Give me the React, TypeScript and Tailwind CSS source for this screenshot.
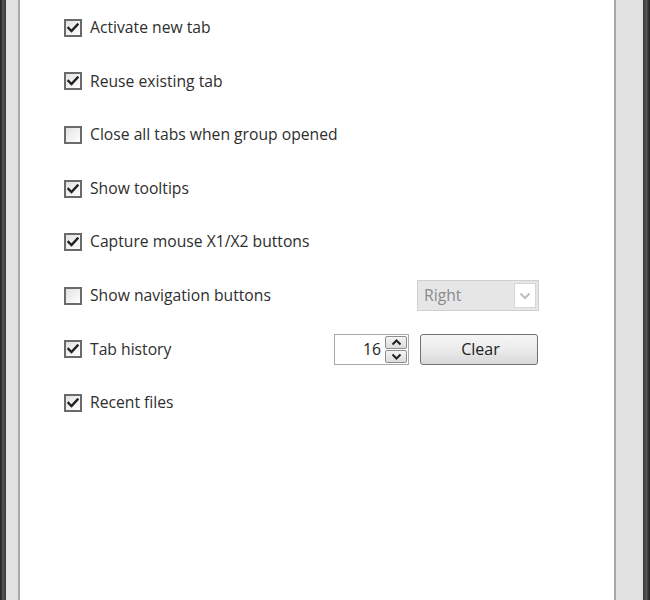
import React, { useState } from 'react';

type Opt = { id: string; label: string; checked: boolean };

const initial: Opt[] = [
  { id: 'activate', label: 'Activate new tab', checked: true },
  { id: 'reuse', label: 'Reuse existing tab', checked: true },
  { id: 'closeAll', label: 'Close all tabs when group opened', checked: false },
  { id: 'tooltips', label: 'Show tooltips', checked: true },
  { id: 'mouse', label: 'Capture mouse X1/X2 buttons', checked: true },
  { id: 'nav', label: 'Show navigation buttons', checked: false },
  { id: 'history', label: 'Tab history', checked: true },
  { id: 'recent', label: 'Recent files', checked: true },
];

const Check = ({ checked, onClick }: { checked: boolean; onClick: () => void }) => (
  <button
    onClick={onClick}
    className="w-[18px] h-[18px] shrink-0 border-2 border-[#6a6a6a] bg-gradient-to-br from-[#e2e2e2] to-white flex items-center justify-center"
  >
    {checked && (
      <svg width="12" height="10" viewBox="0 0 12 10">
        <path d="M1.5 5 L4.5 8 L10.5 1.5" fill="none" stroke="#222" strokeWidth="2.4" strokeLinecap="square" />
      </svg>
    )}
  </button>
);

export default function App() {
  const [opts, setOpts] = useState(initial);
  const [history, setHistory] = useState(16);

  const toggle = (id: string) =>
    setOpts(prev => prev.map(o => (o.id === id ? { ...o, checked: !o.checked } : o)));

  const font = { fontFamily: '"Segoe UI", "Open Sans", "Noto Sans", sans-serif' };

  return (
    <div className="flex h-[600px] w-[650px] overflow-hidden" style={font}>
      <div className="w-[6px] bg-gradient-to-r from-[#1c1c1c] via-[#555] to-[#3a3a3a]" />
      <div className="w-[12px] bg-[#e1e1e1]" />
      <div className="w-[2px] bg-[#a8a8a8]" />
      <div className="flex-1 bg-white pl-[44px] pt-[1px]">
        {opts.map(o => (
          <div key={o.id} className="h-[53.6px] flex items-center text-[15.7px] text-[#2e2e2e]">
            <div
              className={
                o.id === 'nav' ? 'flex items-center w-[353px]' : o.id === 'history' ? 'flex items-center w-[270px]' : 'flex items-center'
              }
            >
              <Check checked={o.checked} onClick={() => toggle(o.id)} />
              <span className="ml-[8px] whitespace-nowrap">{o.label}</span>
            </div>

            {o.id === 'nav' && (
              <div className="w-[122px] h-[31px] border border-[#cfcfcf] bg-[#e6e6e6] flex items-center pl-[6px] pr-[2px]">
                <span className="flex-1 text-[#8a8a8a]">Right</span>
                <div className="w-[22px] h-[25px] bg-white border border-[#d6d6d6] flex items-center justify-center">
                  <svg width="12" height="8" viewBox="0 0 12 8">
                    <path d="M1.5 1.5 L6 6 L10.5 1.5" fill="none" stroke="#bdbdbd" strokeWidth="2" />
                  </svg>
                </div>
              </div>
            )}

            {o.id === 'history' && (
              <div className="flex items-center">
                <div className="w-[75px] h-[31px] border border-[#a9a9a9] bg-white flex items-center pr-[1px]">
                  <span className="flex-1 text-right pr-[4px] text-[#222]">{history}</span>
                  <div className="w-[22px] h-[27px] flex flex-col gap-[1px]">
                    <button
                      onClick={() => setHistory(h => h + 1)}
                      className="flex-1 border border-[#8e8e8e] rounded-[2px] bg-gradient-to-b from-[#f4f4f4] to-[#dcdcdc] flex items-center justify-center"
                    >
                      <svg width="11" height="7" viewBox="0 0 11 7">
                        <path d="M1.5 5.5 L5.5 1.5 L9.5 5.5" fill="none" stroke="#222" strokeWidth="2" />
                      </svg>
                    </button>
                    <button
                      onClick={() => setHistory(h => Math.max(0, h - 1))}
                      className="flex-1 border border-[#8e8e8e] rounded-[2px] bg-gradient-to-b from-[#f4f4f4] to-[#dcdcdc] flex items-center justify-center"
                    >
                      <svg width="11" height="7" viewBox="0 0 11 7">
                        <path d="M1.5 1.5 L5.5 5.5 L9.5 1.5" fill="none" stroke="#222" strokeWidth="2" />
                      </svg>
                    </button>
                  </div>
                </div>
                <button className="ml-[11px] w-[118px] h-[31px] border border-[#707070] rounded-[3px] bg-gradient-to-b from-[#f6f6f6] via-[#ebebeb] to-[#d8d8d8] text-[#222] text-[16px] pl-[3px]">
                  Clear
                </button>
              </div>
            )}
          </div>
        ))}
      </div>
      <div className="w-[2px] bg-[#a8a8a8]" />
      <div className="w-[27px] bg-[#e1e1e1]" />
      <div className="w-[7px] bg-gradient-to-r from-[#3a3a3a] via-[#555] to-[#1c1c1c]" />
    </div>
  );
}
